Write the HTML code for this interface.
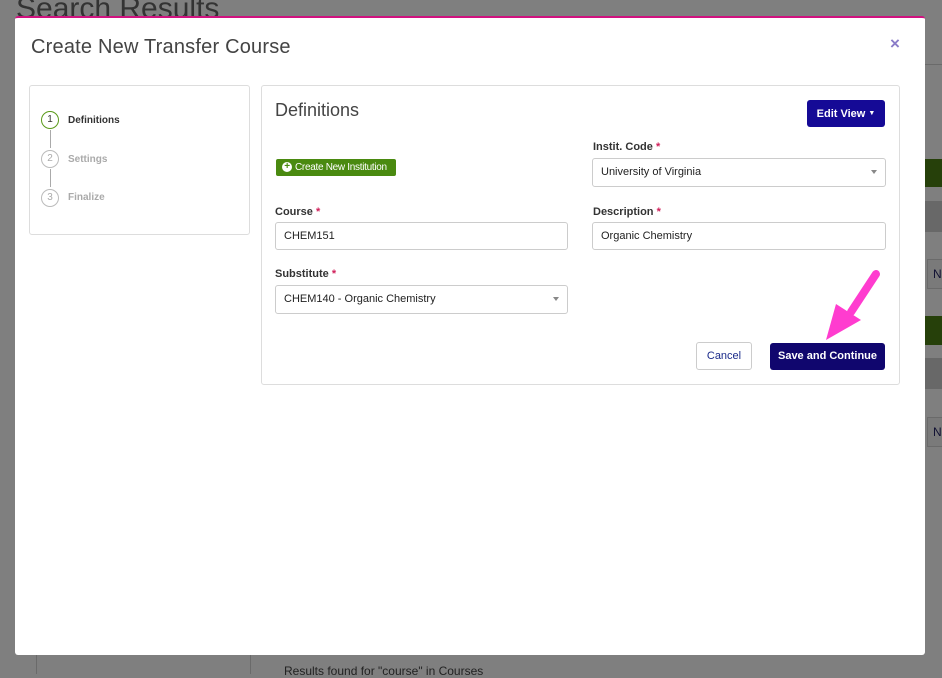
<!DOCTYPE html>
<html><head><style>
body{margin:0;width:942px;height:674px;background:#7f7f7f;position:relative;overflow:hidden;font-family:"Liberation Sans",sans-serif}
.a{position:absolute}
.lbl{font-size:11px;font-weight:bold;color:#333}
.req{color:#d0205a}
.inp{position:absolute;border:1px solid #ccc;border-radius:3px;background:#fff;font-size:11px;color:#222;box-sizing:border-box;padding-left:8px;line-height:26px}
.car{position:absolute;right:8px;top:11px;border-left:3px solid transparent;border-right:3px solid transparent;border-top:4px solid #888}
</style></head><body>
<div class="a" style="left:16px;top:-8px;font-size:30px;color:#333">Search Results</div>
<div class="a" style="left:925px;top:64px;width:17px;height:1px;background:#6a6a6a"></div>
<div class="a" style="left:925px;top:159px;width:17px;height:28px;background:#26400a"></div>
<div class="a" style="left:925px;top:201px;width:17px;height:31px;background:#686868"></div>
<div class="a" style="left:927px;top:259px;width:15px;height:28px;background:#7a7a7a;border:1px solid #6a6a6a;font-size:12px;color:#113;line-height:28px;padding-left:5px">N</div>
<div class="a" style="left:925px;top:316px;width:17px;height:29px;background:#26400a"></div>
<div class="a" style="left:925px;top:358px;width:17px;height:31px;background:#686868"></div>
<div class="a" style="left:927px;top:417px;width:15px;height:28px;background:#7a7a7a;border:1px solid #6a6a6a;font-size:12px;color:#113;line-height:28px;padding-left:5px">N</div>
<div class="a" style="left:36px;top:655px;width:1px;height:19px;background:#6a6a6a"></div>
<div class="a" style="left:250px;top:655px;width:1px;height:19px;background:#6a6a6a"></div>
<div class="a" style="left:284px;top:664px;font-size:12px;color:#222">Results found for "course" in Courses</div>
<div class="a" style="left:15px;top:16px;width:910px;height:639px;background:#fff;border-top:2px solid #d0127f;border-radius:3px;box-sizing:border-box">
<div class="a" style="left:16px;top:18px;font-size:20px;color:#444;letter-spacing:0.2px">Create New Transfer Course</div>
<div class="a" style="left:875px;top:16px;font-size:17px;color:#8a7cc8;font-weight:bold">×</div>
<div class="a" style="left:14px;top:67px;width:219px;height:148px;border:1px solid #ddd;border-radius:3px">
 <div class="a" style="left:11px;top:25px;width:16px;height:16px;border:1px solid #5a9a1a;border-radius:50%;font-size:10px;text-align:center;line-height:16px;color:#333">1</div>
 <div class="a lbl" style="left:38px;top:29px;font-size:10px">Definitions</div>
 <div class="a" style="left:20px;top:44px;width:1px;height:18px;background:#aaa"></div>
 <div class="a" style="left:11px;top:64px;width:16px;height:16px;border:1px solid #bbb;border-radius:50%;font-size:10px;text-align:center;line-height:16px;color:#aaa">2</div>
 <div class="a" style="left:38px;top:68px;font-size:10px;font-weight:bold;color:#aaa">Settings</div>
 <div class="a" style="left:20px;top:83px;width:1px;height:18px;background:#aaa"></div>
 <div class="a" style="left:11px;top:103px;width:16px;height:16px;border:1px solid #bbb;border-radius:50%;font-size:10px;text-align:center;line-height:16px;color:#aaa">3</div>
 <div class="a" style="left:38px;top:106px;font-size:10px;font-weight:bold;color:#aaa">Finalize</div>
</div>
<div class="a" style="left:246px;top:67px;width:637px;height:298px;border:1px solid #ddd;border-radius:3px">
 <div class="a" style="left:13px;top:14px;font-size:18px;color:#444">Definitions</div>
 <div class="a" style="left:545px;top:14px;width:78px;height:27px;background:#150a96;border-radius:3px;color:#fff;font-size:11px;font-weight:bold;line-height:27px;text-align:center">Edit View <span style="font-size:7px;vertical-align:2px">▼</span></div>
 <div class="a" style="left:14px;top:73px;width:120px;height:17px;background:#4a8a10;border-radius:2px;color:#fff;font-size:10px;line-height:17px;padding-left:19px;box-sizing:border-box;letter-spacing:-0.3px"><span style="position:absolute;left:6px;top:3px;width:10px;height:10px;background:#fff;border-radius:50%;color:#4a8a10;font-size:10px;line-height:10px;text-align:center;font-weight:bold">+</span>Create New Institution</div>
 <div class="a lbl" style="left:331px;top:55px">Instit. Code <span class="req">*</span></div>
 <div class="inp" style="left:330px;top:72px;width:294px;height:29px">University of Virginia<span class="car"></span></div>
 <div class="a lbl" style="left:13px;top:120px">Course <span class="req">*</span></div>
 <div class="inp" style="left:13px;top:136px;width:293px;height:28px">CHEM151</div>
 <div class="a lbl" style="left:331px;top:120px">Description <span class="req">*</span></div>
 <div class="inp" style="left:330px;top:136px;width:294px;height:28px">Organic Chemistry</div>
 <div class="a lbl" style="left:13px;top:182px">Substitute <span class="req">*</span></div>
 <div class="inp" style="left:13px;top:199px;width:293px;height:29px">CHEM140 - Organic Chemistry<span class="car"></span></div>
 <div class="a" style="left:434px;top:256px;width:56px;height:28px;border:1px solid #ccc;border-radius:3px;box-sizing:border-box;font-size:11px;color:#1a2a8a;text-align:center;line-height:26px">Cancel</div>
 <div class="a" style="left:508px;top:257px;width:115px;height:27px;background:#10066e;border-radius:3px;color:#fff;font-size:11px;font-weight:bold;text-align:center;line-height:27px">Save and Continue</div>
</div>
<svg class="a" style="left:800px;top:244px" width="80" height="90"><path d="M61 12 L36 50" stroke="#ff3ccf" stroke-width="8" stroke-linecap="round"/><path d="M21 42 L46 58 L11 78 Z" fill="#ff3ccf"/></svg>
</div>
</body></html>
